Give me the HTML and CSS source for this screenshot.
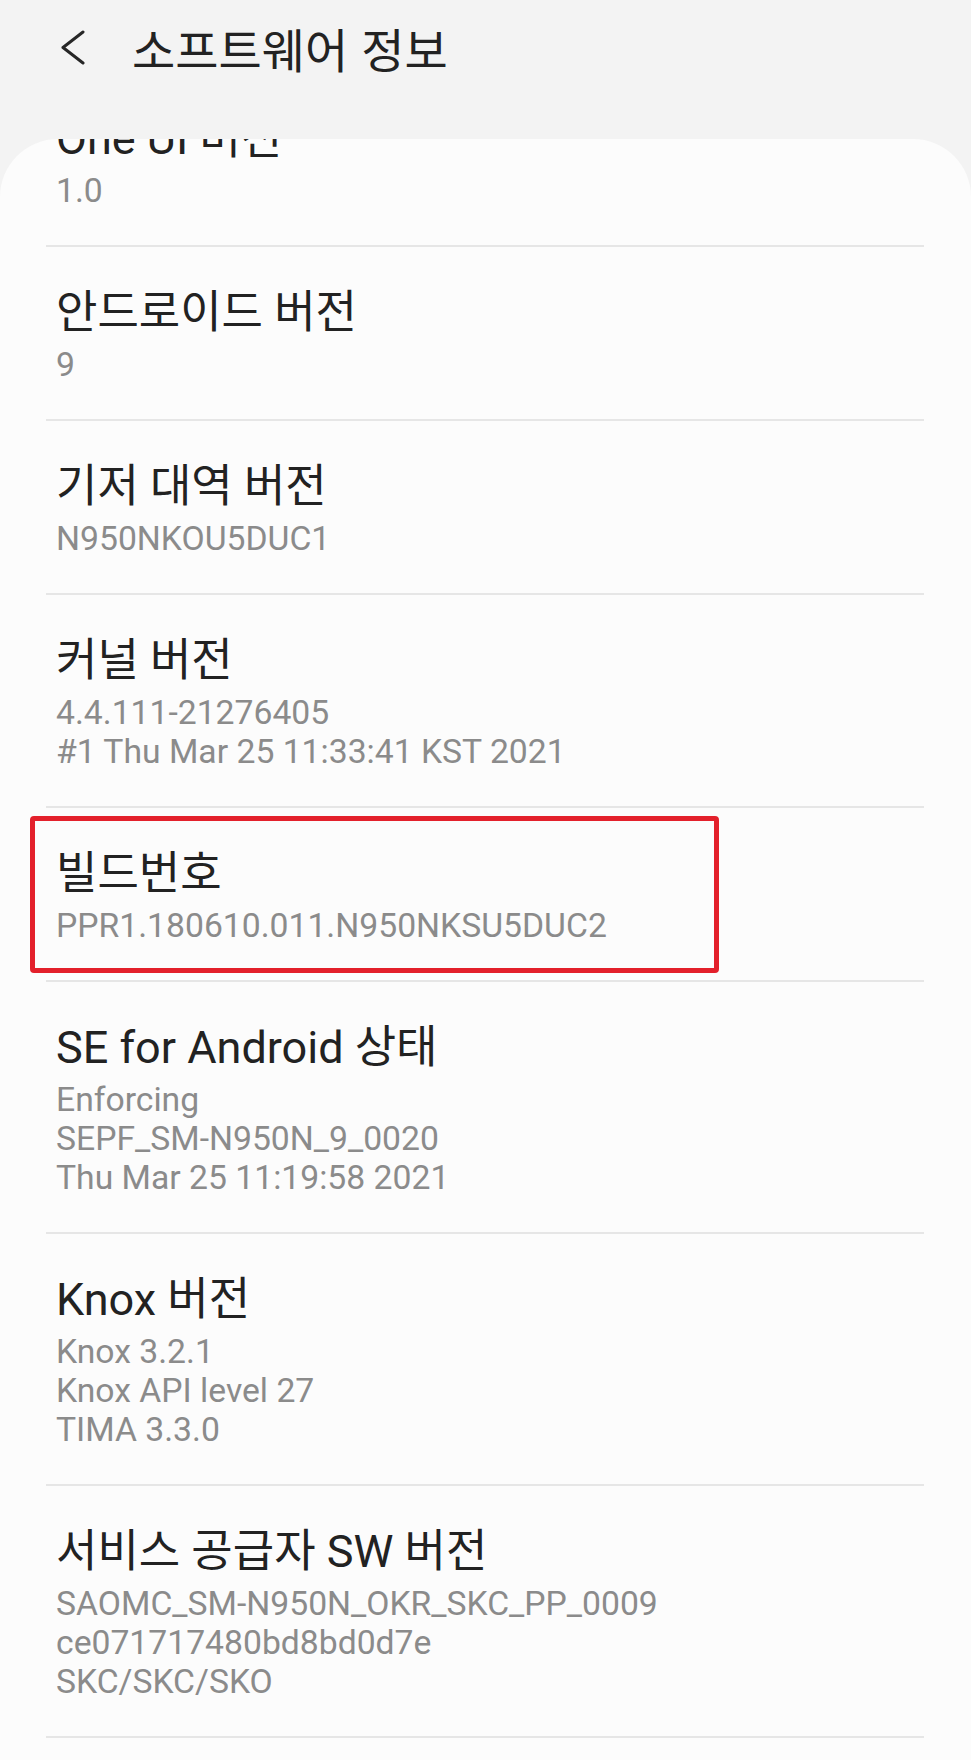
FILE: index.html
```html
<!DOCTYPE html>
<html lang="ko">
<head>
    <meta charset="UTF-8">
    <meta name="viewport" content="width=device-width, initial-scale=1.0">
    <title>소프트웨어 정보</title>
    <link rel="stylesheet" href="styles.css">
</head>
<body>
    <header class="appbar">
        <button class="back" aria-label="뒤로">
            <svg width="26" height="36" viewBox="0 0 26 36">
                <polyline points="23,2 3,17.5 23,33" fill="none" stroke="#262626" stroke-width="3" stroke-linecap="round" stroke-linejoin="round"/>
            </svg>
        </button>
        <h1 class="appbar-title">소프트웨어 정보</h1>
    </header>

    <main class="card">
        <ul class="info-list">
            <li class="info-row">
                <h3>One UI 버전</h3>
                <p>1.0</p>
            </li>
            <li class="info-row">
                <h3>안드로이드 버전</h3>
                <p>9</p>
            </li>
            <li class="info-row">
                <h3>기저 대역 버전</h3>
                <p>N950NKOU5DUC1</p>
            </li>
            <li class="info-row">
                <h3>커널 버전</h3>
                <p>4.4.111-21276405<br>#1 Thu Mar 25 11:33:41 KST 2021</p>
            </li>
            <li class="info-row highlighted">
                <h3>빌드번호</h3>
                <p>PPR1.180610.011.N950NKSU5DUC2</p>
                <span class="mark"></span>
            </li>
            <li class="info-row">
                <h3>SE for Android 상태</h3>
                <p>Enforcing<br>SEPF_SM-N950N_9_0020<br>Thu Mar 25 11:19:58 2021</p>
            </li>
            <li class="info-row">
                <h3>Knox 버전</h3>
                <p>Knox 3.2.1<br>Knox API level 27<br>TIMA 3.3.0</p>
            </li>
            <li class="info-row">
                <h3>서비스 공급자 SW 버전</h3>
                <p>SAOMC_SM-N950N_OKR_SKC_PP_0009<br>ce071717480bd8bd0d7e<br>SKC/SKC/SKO</p>
            </li>
        </ul>
    </main>
</body>
</html>
```

FILE: styles.css
```css
html {
    background-color: #f3f3f3;
}

body {
    margin: 0;
    font-family: Roboto, "Noto Sans CJK KR", sans-serif;
    background-color: #f3f3f3;
    height: 1760px;
    overflow: hidden;
}

.appbar {
    display: flex;
    align-items: center;
    height: 139px;
    box-sizing: border-box;
    padding: 0 0 44px 60px;
}

.back {
    display: flex;
    align-items: center;
    justify-content: center;
    width: 26px;
    height: 36px;
    padding: 0;
    border: none;
    background: none;
}

.appbar-title {
    margin: 0 0 0 46px;
    font-family: "Noto Sans CJK KR", sans-serif;
    font-size: 47px;
    font-weight: 400;
    color: #222222;
    line-height: 58px;
}

.card {
    background-color: #fcfcfc;
    border-radius: 58px 58px 0 0;
    height: 1621px;
    overflow: hidden;
    padding: 0 47px 0 46px;
}

.info-list {
    list-style: none;
    margin: -66px 0 0 0;
    padding: 0;
}

.info-row {
    position: relative;
    padding: 38px 10px 35px;
    border-bottom: 2px solid #e6e6e6;
}

.info-row h3 {
    margin: 0;
    font-family: Roboto, "Noto Sans CJK KR", sans-serif;
    font-size: 45px;
    font-weight: 400;
    line-height: 56px;
    color: #222222;
}

.info-row p {
    margin: 4px 0 0;
    font-size: 33.7px;
    line-height: 39px;
    color: #8b8b8b;
}

/* red annotation box around the build number */
.mark {
    position: absolute;
    top: 8px;
    left: -16px;
    width: 689px;
    height: 157px;
    box-sizing: border-box;
    border: 5px solid #e3202b;
    border-radius: 4px;
}
```
